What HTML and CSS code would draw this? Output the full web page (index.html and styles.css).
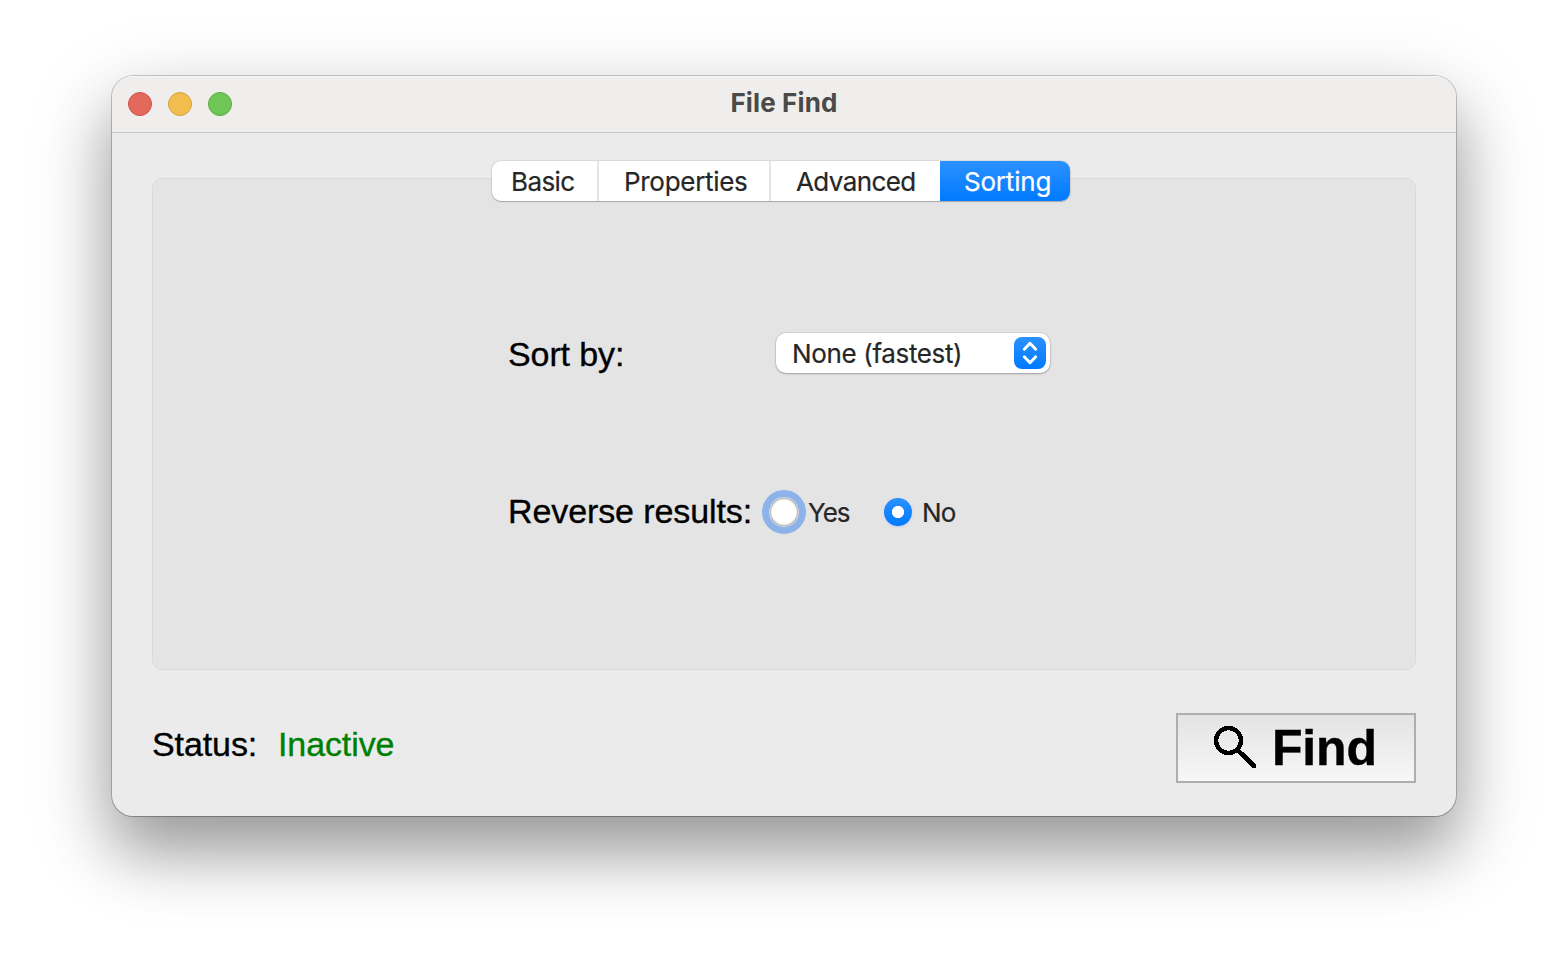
FILE: index.html
```html
<!DOCTYPE html>
<html lang="en">
<head>
<meta charset="utf-8">
<title>File Find</title>
<link rel="stylesheet" href="styles.css">
</head>
<body>
<main class="window">
  <header class="titlebar">
    <div class="lights"><i class="light close"></i><i class="light minimize"></i><i class="light expand"></i></div>
    <h1 class="title">File Find</h1>
  </header>
  <div class="content">
    <nav class="tabs">
      <span class="tab basic">Basic</span>
      <span class="tab properties">Properties</span>
      <span class="tab advanced">Advanced</span>
      <span class="tab sorting">Sorting</span>
    </nav>
    <section class="panel">
      <div class="row sort-row">
        <span class="label">Sort by:</span>
        <div class="select">
          <span class="value">None (fastest)</span>
          <span class="stepper"><svg width="32" height="32" viewBox="0 0 32 32"><path d="M10.300 12.300 16 6.300l5.700 6M10.300 19.700 16 25.700l5.700-6" fill="none" stroke="#fff" stroke-width="2.900" stroke-linecap="round" stroke-linejoin="round"/></svg></span>
        </div>
      </div>
      <div class="row reverse-row">
        <span class="label">Reverse results:</span>
        <span class="radio focused"></span><span class="option yes">Yes</span>
        <span class="radio checked"></span><span class="option no">No</span>
      </div>
    </section>
    <footer class="footer">
      <div class="status"><span class="status-name">Status:</span><span class="state">Inactive</span></div>
      <div class="find">
        <svg class="glass" width="44" height="44" viewBox="0 0 44 44" shape-rendering="crispEdges"><circle cx="15.500" cy="15.500" r="12.500" fill="none" stroke="#000" stroke-width="4.500"/><path d="M24.500 25 41 41" fill="none" stroke="#000" stroke-width="4.800" stroke-linecap="round"/></svg>
        <span class="find-text">Find</span>
      </div>
    </footer>
  </div>
</main>
</body>
</html>
```
FILE: styles.css
```css
* { box-sizing: border-box; }
body {
  margin: 0;
  height: 964px;
  padding: 76px 112px 0;
  background: #fff;
  overflow: hidden;
  font-family: Inter, sans-serif;
  color: #262626;
}
.window {
  width: 1344px;
  height: 740px;
  border-radius: 21px;
  background: #ebebeb;
  overflow: hidden;
  box-shadow: 0 0 0 1px rgba(0,0,0,.2), 0 1px 1px rgba(0,0,0,.12), 0 36px 60px rgba(0,0,0,.29), 0 26px 90px rgba(0,0,0,.18);
}
.titlebar {
  display: grid;
  grid-template-columns: 1fr auto 1fr;
  height: 57px;
  background: #efeeec;
  border-bottom: 1px solid #c9c8c7;
  box-shadow: inset 0 1px #f8f7f6;
}
.lights { display: flex; gap: 16px; padding: 16px 0 0 16px; }
.light { width: 24px; height: 24px; border-radius: 50%; border: 1px solid; }
.close { background: #e3695d; border-color: #ce5148; }
.minimize { background: #f0bd4e; border-color: #d6a03d; }
.expand { background: #6dc655; border-color: #59a942; }
.title { margin: 0; padding-top: 11px; font-size: 26px; line-height: 32px; font-weight: 700; letter-spacing: .15px; color: #4a4a49; white-space: nowrap; }
.content { padding: 28px 40px 0; }
.tabs {
  position: relative;
  z-index: 1;
  display: flex;
  width: 578px;
  height: 40px;
  margin-left: 340px;
  background: #fff;
  border-radius: 9px;
  box-shadow: 0 0 1px 1px rgba(0,0,0,.08), 0 1px 1px rgba(0,0,0,.2);
}
.tab { height: 40px; font-size: 26px; line-height: 42px; white-space: nowrap; -webkit-text-stroke: .2px; }
.basic { width: 107px; padding-left: 19px; border-right: 2px solid #e5e5e5; letter-spacing: -.6px; }
.properties { width: 172px; padding-left: 25px; border-right: 2px solid #e5e5e5; letter-spacing: -.3px; }
.advanced { width: 169px; padding-left: 25px; letter-spacing: -.6px; }
.sorting { width: 130px; padding-left: 24px; color: #fff; background: linear-gradient(#2b91ff, #007aff); border-radius: 0 9px 9px 0; letter-spacing: -.2px; }
.panel {
  height: 492px;
  margin-top: -23px;
  padding: 152px 0 0 355px;
  background: #e4e4e4;
  border: 1px solid #dadada;
  border-radius: 10px;
}
.row { display: flex; align-items: center; height: 44px; }
.reverse-row { margin-top: 115px; }
.label { width: 268px; font: 34px/44px "Liberation Sans", sans-serif; letter-spacing: -.1px; -webkit-text-stroke: .35px; color: #000; white-space: nowrap; }
.sort-row .label { padding-top: 2px; }
.reverse-row .label { width: 254px; margin-top: -2px; }
.select {
  display: flex;
  justify-content: space-between;
  align-items: center;
  width: 274px;
  height: 40px;
  padding: 0 4px 0 16px;
  border-radius: 10px;
  background: #fff;
  box-shadow: 0 0 1px 1px rgba(0,0,0,.07), 0 1px 2px rgba(0,0,0,.25);
}
.value { padding-top: 2px; font-size: 26px; line-height: 38px; letter-spacing: -.35px; -webkit-text-stroke: .2px; white-space: nowrap; }
.stepper { width: 32px; height: 32px; border-radius: 8px; background: linear-gradient(#2b91ff, #007aff); }
.stepper svg { display: block; }
.radio { flex: none; border-radius: 50%; }
.focused { width: 44px; height: 44px; border: 7px solid #8db3eb; background: radial-gradient(#fff 11px, #f3f3f3 12.500px, #b8b8b8 13.500px, #d5d5d5 14.500px); background-origin: border-box; background-clip: padding-box; }
.checked { width: 28px; height: 28px; background: radial-gradient(circle, #fff 5.700px, transparent 6.500px), linear-gradient(#2b91ff, #007aff); box-shadow: 0 1px 2px rgba(0,90,255,.2); }
.option { font-size: 26px; line-height: 40px; padding-top: 2px; -webkit-text-stroke: .2px; white-space: nowrap; }
.yes { width: 78px; padding-left: 2px; letter-spacing: -1px; }
.no { padding-left: 10px; letter-spacing: -.8px; }
.footer { display: flex; justify-content: space-between; padding-top: 43px; }
.status { display: flex; width: 300px; height: 62px; font: 34px/62px "Liberation Sans", sans-serif; letter-spacing: -.1px; -webkit-text-stroke: .35px; color: #000; }
.status-name { width: 126px; }
.state { color: #008000; }
.find { display: flex; width: 240px; height: 70px; padding: 10px 0 0 35px; border: 2px solid #aeaeae; background: linear-gradient(#e3e3e3, #f7f7f7); }
.find-text { margin-left: 15px; font: bold 50px/46px "Liberation Sans", sans-serif; letter-spacing: -.2px; -webkit-text-stroke: .4px; color: #000; }
```
